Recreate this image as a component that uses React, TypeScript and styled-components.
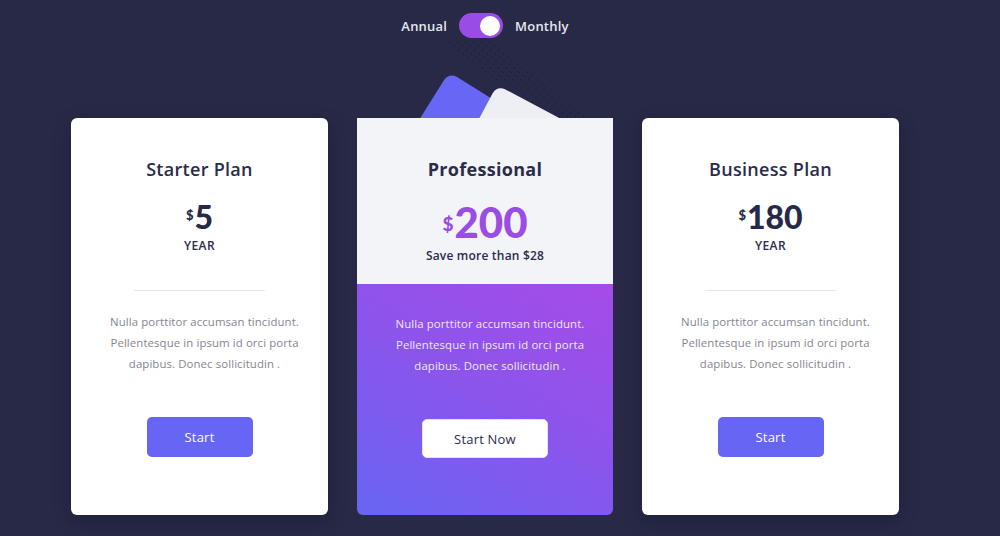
import React from "react";
import styled, { createGlobalStyle } from "styled-components";

const Global = createGlobalStyle`
  html, body { margin: 0; padding: 0; }
  body {
    background: #272946;
    width: 1000px;
    height: 536px;
    overflow: hidden;
    font-family: "Open Sans", "Liberation Sans", sans-serif;
  }
`;

const Page = styled.div`
  width: 1000px;
  height: 536px;
  box-sizing: border-box;
  padding: 13px 30px 0 0;
  display: flex;
  flex-direction: column;
  align-items: center;
`;

const Toggle = styled.div`
  position: relative;
  z-index: 2;
  display: flex;
  align-items: center;
  gap: 12px;
  height: 25px;
`;

const ToggleLabel = styled.span`
  font-family: "Open Sans", sans-serif;
  font-size: 13px;
  font-weight: 600;
  color: #e6e7ef;
  letter-spacing: 0.2px;
`;

const Switch = styled.div`
  width: 44px;
  height: 25px;
  border-radius: 13px;
  background: #9a4de6;
  display: flex;
  align-items: center;
  justify-content: flex-end;
  padding: 0 3px;
  box-sizing: border-box;
`;

const Knob = styled.div`
  width: 20px;
  height: 20px;
  border-radius: 50%;
  background: #ffffff;
`;

const Cards = styled.div`
  margin-top: 80px;
  display: flex;
  gap: 29px;
  align-items: flex-start;
`;

const Card = styled.div`
  position: relative;
  width: 257px;
  height: 397px;
  background: #ffffff;
  border-radius: 6px;
  box-sizing: border-box;
  padding-top: 40px;
  display: flex;
  flex-direction: column;
  align-items: center;
  box-shadow: 0 6px 18px rgba(10, 10, 30, 0.25);
`;

const FeaturedCard = styled.div`
  position: relative;
  width: 256px;
  height: 397px;
  display: flex;
  flex-direction: column;
  border-radius: 0 0 6px 6px;
`;

const Decor = styled.div<{ $color: string; $x: number; $y: number; $rot: number }>`
  position: absolute;
  left: ${(p) => p.$x}px;
  top: ${(p) => p.$y}px;
  width: 130px;
  height: 130px;
  background: ${(p) => p.$color};
  border-radius: 9px;
  transform-origin: 0 0;
  transform: rotate(${(p) => p.$rot}deg);
  z-index: 0;
`;

const Dots = styled.svg`
  position: absolute;
  left: 92px;
  top: -76px;
  z-index: 0;
  overflow: visible;
`;

const FeaturedTop = styled.div`
  position: relative;
  z-index: 1;
  height: 166px;
  background: #f3f4f8;
  box-sizing: border-box;
  padding-top: 40px;
  display: flex;
  flex-direction: column;
  align-items: center;
`;

const FeaturedBottom = styled.div`
  position: relative;
  z-index: 1;
  flex: 1;
  border-radius: 0 0 6px 6px;
  background: linear-gradient(30deg, #6865f3 0%, #8a55ec 50%, #a64be8 100%);
  box-sizing: border-box;
  padding-top: 30px;
  display: flex;
  flex-direction: column;
  align-items: center;
`;

const Title = styled.h2`
  margin: 0;
  font-family: "Open Sans", sans-serif;
  font-size: 18px;
  line-height: 22px;
  font-weight: 600;
  color: #2a2c4a;
  letter-spacing: 0.3px;
`;

const BoldTitle = styled(Title)`
  font-weight: 700;
`;

const Price = styled.div<{ $big?: boolean }>`
  margin-top: ${(p) => (p.$big ? 20 : 18)}px;
  display: flex;
  align-items: flex-start;
  font-family: Lato, "Open Sans", sans-serif;
  font-weight: 900;
  font-size: ${(p) => (p.$big ? 42 : 32)}px;
  line-height: ${(p) => (p.$big ? 44 : 37)}px;
  color: ${(p) => (p.$big ? "#9a4de6" : "#262947")};
  letter-spacing: 0;
`;

const Currency = styled.span<{ $big?: boolean }>`
  font-size: ${(p) => (p.$big ? 19 : 13)}px;
  line-height: 1;
  margin-top: ${(p) => (p.$big ? 14 : 11)}px;
  margin-right: 1px;
`;

const Period = styled.div`
  margin-top: 3px;
  font-family: "Open Sans", sans-serif;
  font-size: 12px;
  line-height: 16px;
  font-weight: 600;
  color: #2a2c4a;
  letter-spacing: 0.4px;
`;

const Save = styled(Period)`
  margin-top: 4px;
  font-size: 12px;
  letter-spacing: 0.2px;
`;

const Divider = styled.div`
  margin-top: 36px;
  width: 131px;
  height: 1px;
  background: #e7e7ee;
`;

const Body = styled.p<{ $light?: boolean }>`
  margin: ${(p) => (p.$light ? 0 : "21px")} 0 0 10px;
  width: 214px;
  text-align: center;
  font-family: "Open Sans", sans-serif;
  font-size: 11.4px;
  line-height: 20.8px;
  color: ${(p) => (p.$light ? "#ece8fb" : "#85858f")};
  letter-spacing: 0.1px;
`;

const Button = styled.button<{ $white?: boolean }>`
  margin-top: 43px;
  width: ${(p) => (p.$white ? 126 : 106)}px;
  height: ${(p) => (p.$white ? 39 : 40)}px;
  border-radius: 5px;
  border: ${(p) => (p.$white ? "1px solid #e4e4ee" : "none")};
  background: ${(p) => (p.$white ? "#ffffff" : "#6765f3")};
  color: ${(p) => (p.$white ? "#2a2c4a" : "#ffffff")};
  font-family: "Open Sans", sans-serif;
  font-size: 13px;
  font-weight: 500;
  letter-spacing: 0.2px;
  cursor: pointer;
`;

type Plan = { name: string; price: string };

const PlanCard = ({ name, price }: Plan) => (
  <Card>
    <Title>{name}</Title>
    <Price>
      <Currency>$</Currency>
      {price}
    </Price>
    <Period>YEAR</Period>
    <Divider />
    <Body>
      Nulla porttitor accumsan tincidunt. Pellentesque in ipsum id orci porta
      dapibus. Donec sollicitudin .
    </Body>
    <Button>Start</Button>
  </Card>
);

const dotLines = [0, 8, 16, 24, 32, 40];

export default function App() {
  return (
    <>
      <Global />
      <Page>
        <Toggle>
          <ToggleLabel>Annual</ToggleLabel>
          <Switch>
            <Knob />
          </Switch>
          <ToggleLabel>Monthly</ToggleLabel>
        </Toggle>
        <Cards>
          <PlanCard name="Starter Plan" price="5" />
          <FeaturedCard>
            <Dots width="110" height="80">
              {dotLines.map((o) => (
                <line
                  key={o}
                  x1={o}
                  y1={0}
                  x2={o + 96}
                  y2={76}
                  stroke="#15162b"
                  strokeWidth="1"
                  strokeDasharray="1 5"
                />
              ))}
            </Dots>
            <Decor $color="#6866f4" $x={92} $y={-46} $rot={32} />
            <Decor $color="#eeeff4" $x={140} $y={-33} $rot={28} />
            <FeaturedTop>
              <BoldTitle>Professional</BoldTitle>
              <Price $big>
                <Currency $big>$</Currency>
                200
              </Price>
              <Save>Save more than $28</Save>
            </FeaturedTop>
            <FeaturedBottom>
              <Body $light>
                Nulla porttitor accumsan tincidunt. Pellentesque in ipsum id orci
                porta dapibus. Donec sollicitudin .
              </Body>
              <Button $white>Start Now</Button>
            </FeaturedBottom>
          </FeaturedCard>
          <PlanCard name="Business Plan" price="180" />
        </Cards>
      </Page>
    </>
  );
}
